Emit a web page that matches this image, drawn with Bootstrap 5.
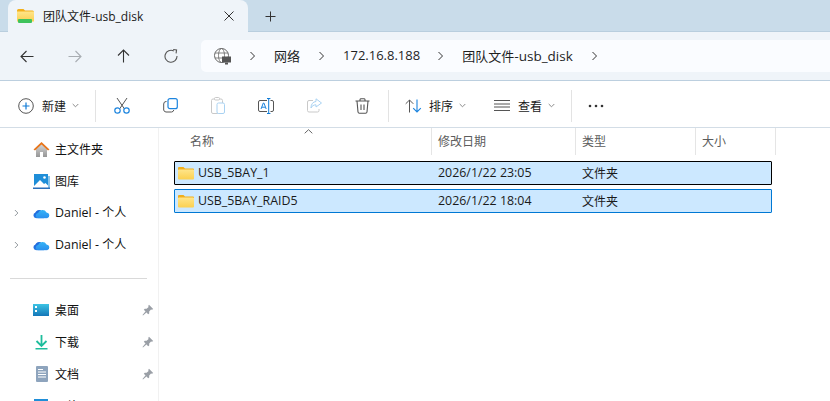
<!DOCTYPE html>
<html lang="zh">
<head>
  <meta charset="UTF-8" />
  <meta name="viewport" content="width=device-width, initial-scale=1" />
  <title>团队文件-usb_disk</title>
  <link href="https://cdn.jsdelivr.net/npm/bootstrap@5.3.3/dist/css/bootstrap.min.css" rel="stylesheet" />
  <style>
    html, body { height: 401px; overflow: hidden; }
    body { font-family: "Noto Sans CJK SC", "Liberation Sans", sans-serif; font-size: 12px; color: #1a1a1a; background: #fff; }
    .latin { font-family: "Open Sans", "Noto Sans CJK SC", sans-serif; }

    .tabstrip { height: 32px; background: #c9dcea; padding-left: 8px; box-shadow: inset 0 -1px 0 #b9cede; }
    .wintab { width: 240px; height: 32px; background: #eff4f9; border-radius: 8px 8px 0 0; padding: 0 14px 0 9px; gap: 9px; }
    .wintab .tabname { font-size: 12px; flex: 1; }
    .newtab { margin-left: 9px; width: 26px; height: 32px; }

    .navrow { height: 49px; background: #eff4f9; border-bottom: 1px solid #bccfdf; padding-left: 3px; }
    .navbtn { width: 48px; height: 48px; flex: none; }
    .addr { width: 629px; margin-left: 6px; height: 32px; background: #fafcff; border-radius: 5px 0 0 5px; padding-left: 13px; font-size: 13px; }
    .addr .crumb { color: #1f1f1f; white-space: nowrap; }
    .addr .crumb .latin { font-size: 13.500px; }
    .addr .chev { flex: none; color: #333; }

    .toolbar { height: 47px; border-bottom: 1px solid #d3dde6; padding: 3px 0 0 18px; font-size: 12px; }
    .tsep { width: 1px; height: 32px; background: #e3e3e3; flex: none; }
    .tbtn { width: 48px; flex: none; }

    .sidepane { width: 159px; flex: none; border-right: 1px solid #f1f1f1; height: 273px; padding-top: 5px; overflow: hidden; }
    .sideitem { height: 32px; padding-left: 33px; position: relative; font-size: 12px; color: #111; gap: 5px; }
    .sideitem .latin { font-size: 12.400px; }
    .sideitem .expander { position: absolute; left: 13px; top: 11px; }
    .sideitem .pin { position: absolute; left: 142px; top: 10px; }
    .sidegap { height: 1px; background: #d9d9d9; margin: 17px 11px 15px 10px; }

    .mainpane { flex: 1; position: relative; padding-left: 15px; }
    .colhead { height: 27px; color: #5c5c5c; font-size: 12px; position: relative; }
    .colhead > div { height: 27px; padding-left: 6px; border-right: 1px solid #e5e5e5; line-height: 25px; }
    .col-name { width: 258px; padding-left: 16px !important; }
    .col-date { width: 144px; }
    .col-type { width: 120px; }
    .col-size { width: 80px; }
    .sortcaret { position: absolute; left: 130px; top: 1px; }
    .filerows { padding-top: 6px; width: 598px; }
    .filerow { height: 24px; background: #cce8ff; border: 1px solid #0078d4; border-radius: 1px; margin-bottom: 4px; font-size: 12px; color: #1a1a1a; }
    .filerow .latin { font-size: 12.400px; }
    .filerow.focused { border-color: #000; }
    .filerow .cell-name { width: 257px; padding-left: 3px; gap: 4px; }
    .filerow .cell-date { width: 144px; padding-left: 6px; }
    .filerow .cell-type { padding-left: 6px; }
  </style>
</head>
<body>
  <svg width="0" height="0" class="position-absolute">
    <defs>
      <linearGradient id="fold" x1="0" y1="0" x2="0" y2="1"><stop offset="0" stop-color="#ffe58a"/><stop offset="1" stop-color="#fbd04f"/></linearGradient>
      <linearGradient id="cloud" x1="0" y1="0" x2="1" y2="1"><stop offset="0" stop-color="#1a5fd6"/><stop offset="1" stop-color="#2f8ff0"/></linearGradient>
      <linearGradient id="cloudtop" x1="0" y1="0" x2="0" y2="1"><stop offset="0" stop-color="#35b4f6"/><stop offset="1" stop-color="#2a8fee"/></linearGradient>
      <linearGradient id="desk" x1="0" y1="0" x2="0" y2="1"><stop offset="0" stop-color="#3cc4e4"/><stop offset="1" stop-color="#1476b8"/></linearGradient>
      <linearGradient id="homebody" x1="0" y1="0" x2="0" y2="1"><stop offset="0" stop-color="#d6d6d6"/><stop offset="1" stop-color="#969696"/></linearGradient>
      <symbol id="folder" viewBox="0 0 16 14"><path d="M0 2a1 1 0 0 1 1-1h4.500l1.500 1.500h8a1 1 0 0 1 1 1V4H0z" fill="#f0ae1b"/><rect x="0" y="3.500" width="16" height="10" rx="1" fill="url(#fold)"/></symbol>
      <symbol id="chev" viewBox="0 0 8 12"><path d="M2.500 2 6.500 6 2.500 10" fill="none" stroke="currentColor" stroke-width="1"/></symbol>
      <symbol id="onedrive" viewBox="0 0 16 11"><path d="M3 10.500a2.800 2.800 0 0 1-.8-5.400A3.800 3.800 0 0 1 7.500 3l3 7.500z" fill="url(#cloud)"/><path d="M4.500 10.500a2.500 2.500 0 0 1 .3-4.900A4.300 4.300 0 0 1 12.700 5a2.800 2.800 0 0 1 .6 5.500z" fill="url(#cloudtop)"/></symbol>
      <symbol id="pin" viewBox="0 0 12 12"><path d="M7 .8 11.200 5 10 5.800 9 5.400 7.200 7.400 7.200 9.400 6.200 10.200 1.800 5.800 2.800 4.800 4.600 4.800 6.600 3 6.200 2z M3.400 7.600 4.400 8.600 1 11.500.5 11z" fill="#9a9fa6"/></symbol>
    </defs>
  </svg>

  <div class="tabstrip d-flex align-items-center">
    <div class="wintab d-flex align-items-center">
      <svg width="17" height="16" viewBox="0 0 17 16"><path d="M0 2.500a1.500 1.500 0 0 1 1.500-1.500h5l1.500 1.500h7.500a1.500 1.500 0 0 1 1.500 1.500v1H0z" fill="#f3b01c"/><rect y="3.500" width="17" height="10" fill="url(#fold)"/><rect x="1" y="11" width="14" height="4" rx="1" fill="#3fc35c"/></svg>
      <span class="tabname">团队文件-<span class="latin">usb_disk</span></span>
      <svg width="10" height="10" viewBox="0 0 10 10"><path d="M.5.500l9 9m0-9-9 9" stroke="#333" stroke-width="1"/></svg>
    </div>
    <div class="newtab d-flex align-items-center justify-content-center">
      <svg width="11" height="11" viewBox="0 0 11 11"><path d="M5.500.500v10M.5 5.500h10" stroke="#333" stroke-width="1"/></svg>
    </div>
  </div>

  <div class="navrow d-flex align-items-center">
    <div class="navbtn d-flex align-items-center justify-content-center"><svg width="14" height="13" viewBox="0 0 14 13"><path d="M13.500 6.500H1M6.500 1 1 6.500 6.500 12" fill="none" stroke="#333" stroke-width="1.100"/></svg></div>
    <div class="navbtn d-flex align-items-center justify-content-center"><svg width="14" height="13" viewBox="0 0 14 13"><path d="M.5 6.500H13M7.500 1 13 6.500 7.500 12" fill="none" stroke="#a8adb2" stroke-width="1.100"/></svg></div>
    <div class="navbtn d-flex align-items-center justify-content-center"><svg width="13" height="14" viewBox="0 0 13 14"><path d="M6.500 13.500V1M1 6.500 6.500 1 12 6.500" fill="none" stroke="#333" stroke-width="1.100"/></svg></div>
    <div class="navbtn d-flex align-items-center justify-content-center"><svg width="14" height="14" viewBox="0 0 14 14"><path d="M9.800 2A6 6 0 1 0 13 7" fill="none" stroke="#555" stroke-width="1.100"/><path d="M9 .8h3.400v3.400" fill="none" stroke="#555" stroke-width="1.100" transform="rotate(8 11 2)"/></svg></div>
    <div class="addr d-flex align-items-center">
      <svg width="17" height="17" viewBox="0 0 17 17"><circle cx="7.500" cy="7.500" r="7" fill="#fff" stroke="#666"/><ellipse cx="7.500" cy="7.500" rx="3" ry="7" fill="none" stroke="#666" stroke-width=".8"/><path d="M1 5h13M1 10h13" stroke="#666" stroke-width=".8"/><rect x="8" y="8.500" width="9" height="6" fill="#555"/><rect x="11" y="14.500" width="3" height="2" fill="#555"/></svg>
      <svg width="8" height="12" class="chev" style="margin-left:17px"><use href="#chev"/></svg>
      <span class="crumb" style="margin-left:18px">网络</span>
      <svg width="8" height="12" class="chev" style="margin-left:17px"><use href="#chev"/></svg>
      <span class="crumb latin" style="margin-left:18px;font-size:13px">172.16.8.188</span>
      <svg width="8" height="12" class="chev" style="margin-left:16px"><use href="#chev"/></svg>
      <span class="crumb" style="margin-left:18px">团队文件-<span class="latin">usb_disk</span></span>
      <svg width="8" height="12" class="chev" style="margin-left:17px"><use href="#chev"/></svg>
    </div>
  </div>

  <div class="toolbar d-flex align-items-center">
    <svg width="16" height="16" viewBox="0 0 16 16"><circle cx="8" cy="8" r="7.300" fill="none" stroke="#555" stroke-width="1"/><path d="M8 4.500v7M4.500 8h7" stroke="#0f7bd6" stroke-width="1.200"/></svg>
    <span style="margin-left:8px">新建</span>
    <svg width="7" height="5" viewBox="0 0 7 5" style="margin-left:6px"><path d="M.7 1 3.500 3.800 6.300 1" fill="none" stroke="#8a8a8a"/></svg>
    <div class="tsep" style="margin-left:16px"></div>

    <div class="d-flex align-items-center" style="margin-left:2px">
      <div class="tbtn d-flex justify-content-center"><svg width="16" height="17" viewBox="0 0 16 17"><path d="M3 1 10.500 12M13 1 5.500 12" stroke="#555" stroke-width="1"/><circle cx="3.500" cy="13.500" r="2.700" fill="none" stroke="#1c84de" stroke-width="1.200"/><circle cx="12.500" cy="13.500" r="2.700" fill="none" stroke="#1c84de" stroke-width="1.200"/></svg></div>
      <div class="tbtn d-flex justify-content-center"><svg width="15" height="15" viewBox="0 0 15 15"><path d="M3.500 3.500H3A2.500 2.500 0 0 0 .7 6v6A2.500 2.500 0 0 0 3 14h5.500a2.500 2.500 0 0 0 2.300-2" fill="none" stroke="#555" stroke-width="1"/><rect x="5" y=".7" width="9.300" height="10" rx="2" fill="#fff" stroke="#1c84de" stroke-width="1.200"/></svg></div>
      <div class="tbtn d-flex justify-content-center"><svg width="14" height="17" viewBox="0 0 14 17"><rect x=".5" y="2" width="11" height="14.500" rx="1.500" fill="none" stroke="#c9c9c9"/><rect x="3.500" y=".5" width="5" height="2.500" rx="1" fill="#fff" stroke="#c9c9c9"/><rect x="6" y="6" width="7.500" height="10.500" rx="1.500" fill="#fff" stroke="#a9d2f2"/></svg></div>
      <div class="tbtn d-flex justify-content-center"><svg width="16" height="16" viewBox="0 0 16 16"><path d="M9 2.500H2A1.500 1.500 0 0 0 .5 4v8A1.500 1.500 0 0 0 2 13.500h7M12.500 2.500H14A1.500 1.500 0 0 1 15.500 4v8a1.500 1.500 0 0 1-1.500 1.500h-1.500" fill="none" stroke="#555" stroke-width="1"/><path d="M3 11 5.300 5h.6L8.200 11M3.900 9.200h3.400" fill="none" stroke="#1c84de" stroke-width="1"/><path d="M10.700.5v15M9 .5h3.400M9 15.500h3.400" fill="none" stroke="#0f7bd6" stroke-width="1"/></svg></div>
      <div class="tbtn d-flex justify-content-center"><svg width="15" height="15" viewBox="0 0 15 15"><path d="M6 2.500H2A1.500 1.500 0 0 0 .5 4v8.500A1.500 1.500 0 0 0 2 14h8.500a1.500 1.500 0 0 0 1.500-1.500V11" fill="none" stroke="#c9c9c9"/><path d="M9 .8 14.500 5 9 9V6.800C6.500 6.800 5 8 4 10c0-4 2-6.200 5-6.500z" fill="#fff" stroke="#a9d2f2"/></svg></div>
      <div class="tbtn d-flex justify-content-center"><svg width="15" height="16" viewBox="0 0 15 16"><path d="M.5 3h14M5 3V1.500A1 1 0 0 1 6 .7h3a1 1 0 0 1 1 .8V3M2 3l1 11a1.500 1.500 0 0 0 1.500 1.300h6A1.500 1.500 0 0 0 12 14l1-11M6 6.500v5.500M9 6.500v5.500" fill="none" stroke="#555" stroke-width="1.100"/></svg></div>
    </div>

    <div class="tsep" style="margin-left:2px"></div>
    <svg width="17" height="14" viewBox="0 0 17 14" style="margin-left:16px"><path d="M4.500 13.500V1M.7 4.800 4.500 1l3.800 3.800" fill="none" stroke="#555"/><path d="M12 .5V13M8.200 9.200 12 13l3.800-3.800" fill="none" stroke="#1c84de" stroke-width="1.100"/></svg>
    <span style="margin-left:7px">排序</span>
    <svg width="7" height="5" viewBox="0 0 7 5" style="margin-left:6px"><path d="M.7 1 3.500 3.800 6.300 1" fill="none" stroke="#8a8a8a"/></svg>
    <svg width="16" height="11" viewBox="0 0 16 11" style="margin-left:28px"><path d="M0 .5h16M0 4h16M0 7h16M0 10.500h16" stroke="#555"/></svg>
    <span style="margin-left:8px">查看</span>
    <svg width="7" height="5" viewBox="0 0 7 5" style="margin-left:6px"><path d="M.7 1 3.500 3.800 6.300 1" fill="none" stroke="#8a8a8a"/></svg>
    <div class="tsep" style="margin-left:16px"></div>
    <svg width="16" height="4" viewBox="0 0 16 4" style="margin-left:16px"><circle cx="2" cy="2" r="1.300" fill="#333"/><circle cx="8" cy="2" r="1.300" fill="#333"/><circle cx="14" cy="2" r="1.300" fill="#333"/></svg>
  </div>

  <div class="d-flex">
    <div class="sidepane">
      <div class="sideitem d-flex align-items-center">
        <svg width="17" height="16" viewBox="0 0 17 16"><path d="M3 8 8.500 3 14 8v8h-4v-5H7v5H3z" fill="url(#homebody)"/><path d="M.5 8.500 8.500 1l8 7.500-1.500 1-6.500-6-6.500 6z" fill="#e8751a"/></svg>
        <span>主文件夹</span>
      </div>
      <div class="sideitem d-flex align-items-center">
        <svg width="17" height="16" viewBox="0 0 17 16"><rect x="1" y="1" width="14" height="14" fill="#1f8ed8"/><rect x="15" y="3" width="2" height="12" fill="#8ac4ea"/><path d="M1 13 7 7l4 4 1.500-1L15 12.500V15H1z" fill="#fff"/><circle cx="11.500" cy="4.500" r="1.300" fill="#fff"/><rect y="14.500" width="17" height="1.500" fill="#2a6fba"/></svg>
        <span>图库</span>
      </div>
      <div class="sideitem d-flex align-items-center">
        <svg width="6" height="10" viewBox="0 0 8 12" class="expander text-secondary"><use href="#chev"/></svg>
        <svg width="17" height="12" viewBox="0 0 16 11"><use href="#onedrive"/></svg>
        <span><span class="latin">Daniel - </span>个人</span>
      </div>
      <div class="sideitem d-flex align-items-center">
        <svg width="6" height="10" viewBox="0 0 8 12" class="expander text-secondary"><use href="#chev"/></svg>
        <svg width="17" height="12" viewBox="0 0 16 11"><use href="#onedrive"/></svg>
        <span><span class="latin">Daniel - </span>个人</span>
      </div>
      <div class="sidegap"></div>
      <div class="sideitem d-flex align-items-center">
        <svg width="17" height="12" viewBox="0 0 17 12"><rect width="16" height="12" fill="url(#desk)"/><rect x="2" y="2" width="2" height="2" fill="#fff"/><rect x="2" y="6" width="2" height="2" fill="#fff"/></svg>
        <span>桌面</span>
        <svg width="12" height="12" class="pin"><use href="#pin"/></svg>
      </div>
      <div class="sideitem d-flex align-items-center">
        <svg width="17" height="16" viewBox="0 0 17 16"><path d="M8.500 1v11M3.500 7l5 5 5-5" fill="none" stroke="#1ebd9c" stroke-width="1.800"/><rect x="2.500" y="14" width="12" height="1.500" fill="#1ebd9c"/></svg>
        <span>下载</span>
        <svg width="12" height="12" class="pin"><use href="#pin"/></svg>
      </div>
      <div class="sideitem d-flex align-items-center">
        <svg width="17" height="16" viewBox="0 0 17 16"><rect x="3" width="12" height="16" rx="1" fill="#8ea4bd"/><path d="M5 3.500h5M5 6h8M5 8.500h8M5 11h8" stroke="#fff"/></svg>
        <span>文档</span>
        <svg width="12" height="12" class="pin"><use href="#pin"/></svg>
      </div>
      <div class="sideitem d-flex align-items-center">
        <svg width="17" height="16" viewBox="0 0 17 16"><rect x="1" y="1" width="14" height="14" fill="#1f8ed8"/></svg>
        <span>图片</span>
      </div>
    </div>

    <div class="mainpane">
      <div class="colhead d-flex">
        <div class="col-name">名称</div>
        <div class="col-date">修改日期</div>
        <div class="col-type">类型</div>
        <div class="col-size">大小</div>
        <svg width="9" height="5" viewBox="0 0 9 5" class="sortcaret"><path d="M.7 4.300 4.500.7l3.800 3.600" fill="none" stroke="#666"/></svg>
      </div>
      <div class="filerows">
        <div class="filerow focused d-flex align-items-center">
          <div class="cell-name d-flex align-items-center"><svg width="16" height="14"><use href="#folder"/></svg><span class="latin">USB_5BAY_1</span></div>
          <div class="cell-date latin">2026/1/22 23:05</div>
          <div class="cell-type">文件夹</div>
        </div>
        <div class="filerow d-flex align-items-center">
          <div class="cell-name d-flex align-items-center"><svg width="16" height="14"><use href="#folder"/></svg><span class="latin">USB_5BAY_RAID5</span></div>
          <div class="cell-date latin">2026/1/22 18:04</div>
          <div class="cell-type">文件夹</div>
        </div>
      </div>
    </div>
  </div>

  <script src="https://cdn.jsdelivr.net/npm/bootstrap@5.3.3/dist/js/bootstrap.bundle.min.js"></script>
</body>
</html>
